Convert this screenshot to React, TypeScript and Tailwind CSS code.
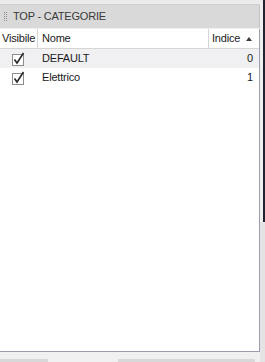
import React from 'react'

type Row = { nome: string; indice: number; visibile: boolean }

const rows: Row[] = [
    { nome: 'DEFAULT', indice: 0, visibile: true },
    { nome: 'Elettrico', indice: 1, visibile: true },
]

const font = { fontFamily: '"Liberation Sans", Arial, sans-serif' }

// casella spuntata in stile Windows classico
const CheckBox = ({ checked }: { checked: boolean }) => (
    <svg width="14" height="14" viewBox="0 0 14 14">
        <rect x="0.5" y="2.5" width="11" height="11" fill="#fff" stroke="#8c8c8c" />
        {checked && (
            <path d="M2.5 7.5 L5 11 L11.5 1" fill="none" stroke="#2a2a2a" strokeWidth="1.6" />
        )}
    </svg>
)

const GripDots = () => (
    <div className="grid grid-cols-2 gap-[1px] w-[3px]">
        {Array.from({ length: 10 }).map((_, i) => (
            <span key={i} className="block w-[1px] h-[1px] bg-[#8a8a8a]" />
        ))}
    </div>
)

const App = () => {
    return (
        <div className="w-[265px] h-[362px] bg-[#f0f0f0] flex overflow-hidden" style={font}>
            <div className="w-[260px] flex flex-col">
                <div className="h-[5px] bg-[#ebebeb] border-b border-[#d0d0d0]" />
                <div className="h-[23px] bg-[#d9d9d9] border-r border-[#c4c4c4] flex items-center pl-[4px] gap-[6px]">
                    <GripDots />
                    <span className="text-[11px] text-[#3a3a3a] tracking-[-0.2px]">TOP - CATEGORIE</span>
                </div>
                <div className="h-[323px] mt-[1px] bg-white border-r border-b border-[#9c9cb0] flex flex-col">
                    <div className="h-[20px] flex border-b border-[#d5d5d5] text-[11px] text-[#1a1a1a] tracking-[-0.2px]">
                        <div className="w-[38px] border-r border-[#d5d5d5] flex items-center pl-[2px]">Visibile</div>
                        <div className="flex-1 border-r border-[#d5d5d5] flex items-center pl-[4px]">Nome</div>
                        <div className="w-[50px] flex items-center pl-[3px] gap-[6px]">
                            Indice
                            <svg width="6" height="4" viewBox="0 0 6 4">
                                <path d="M0 4 L3 0 L6 4 Z" fill="#3a3a3a" />
                            </svg>
                        </div>
                    </div>
                    {rows.map((r, i) => (
                        <div
                            key={r.nome}
                            className={`h-[19px] flex text-[11px] text-[#1a1a1a] tracking-[-0.2px] ${i === 0 ? 'bg-[#f0f0f2]' : 'bg-white'}`}
                        >
                            <div className="w-[38px] flex items-center justify-center">
                                <CheckBox checked={r.visibile} />
                            </div>
                            <div className="flex-1 flex items-center pl-[4px]">{r.nome}</div>
                            <div className="w-[50px] flex items-center justify-end pr-[6px]">{r.indice}</div>
                        </div>
                    ))}
                </div>
                <div className="flex-1 flex items-end">
                    <div className="h-[3px] w-[48px] bg-[#d8d8d8]" />
                    <div className="h-[3px] w-[70px]" />
                    <div className="h-[3px] w-[137px] bg-[#d8d8d8]" />
                </div>
            </div>
            <div className="flex-1 flex flex-col">
                <div className="h-[222px] flex justify-end">
                    <div className="w-[2px] bg-[#1f2430]" />
                </div>
                <div className="flex-1 bg-[#e4e4e4]" />
            </div>
        </div>
    )
}

export default App
